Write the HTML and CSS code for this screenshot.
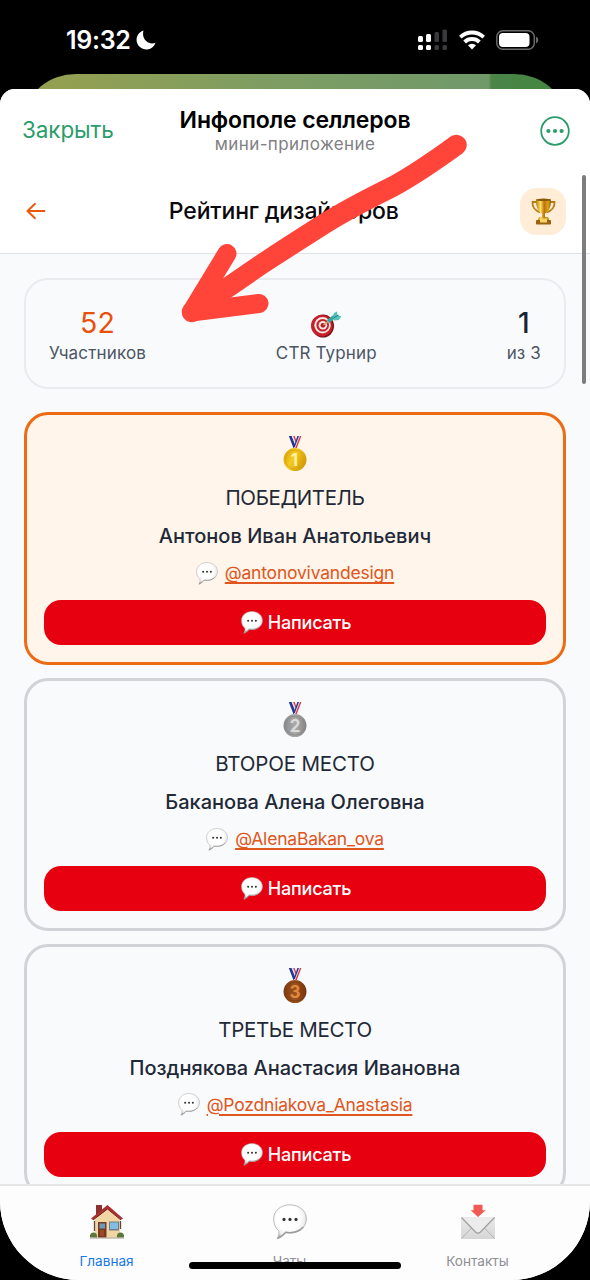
FILE: index.html
```html
<!DOCTYPE html>
<html lang="ru">
<head>
<meta charset="utf-8">
<title>Инфополе селлеров</title>
<link rel="stylesheet" href="styles.css">
</head>
<body>
<svg class="defs" width="0" height="0" aria-hidden="true">
  <defs>
    <radialGradient id="bubbleFill" cx="45%" cy="40%" r="60%"><stop offset="0.6" stop-color="#fff"/><stop offset="0.85" stop-color="#ececec"/><stop offset="1" stop-color="#a8a8a8"/></radialGradient>
    <linearGradient id="goldFill" x1="0" x2="1" y1="0" y2="0.5"><stop offset="0" stop-color="#d89c08"/><stop offset="0.5" stop-color="#f4cc22"/><stop offset="1" stop-color="#d29a08"/></linearGradient>
    <linearGradient id="silverFill" x1="0" x2="1"><stop offset="0" stop-color="#8b8b8b"/><stop offset="0.5" stop-color="#aaa"/><stop offset="1" stop-color="#858585"/></linearGradient>
    <linearGradient id="bronzeFill" x1="0" x2="1"><stop offset="0" stop-color="#7c3b12"/><stop offset="0.5" stop-color="#a0521c"/><stop offset="1" stop-color="#70330e"/></linearGradient>
    <linearGradient id="cupFill" x1="0" x2="1"><stop offset="0" stop-color="#b87808"/><stop offset="0.3" stop-color="#ffe065"/><stop offset="0.55" stop-color="#b97407"/><stop offset="0.8" stop-color="#dda21a"/><stop offset="1" stop-color="#8f5906"/></linearGradient>
    <linearGradient id="mailFill" x1="0" x2="0" y1="0" y2="1"><stop offset="0" stop-color="#e9e9e9"/><stop offset="1" stop-color="#d6d6d6"/></linearGradient>
    <symbol id="bubble" viewBox="0 0 34 36">
      <path d="M17 .8C26.5.8 33.4 7 33.4 14.8S26.5 29 17 29c-1.500 0-3-.1-4.300-.5-2 2.500-5 5.200-8.600 6.200 1.600-2.400 2.200-5 1.800-7.800C2.500 24.300.6 20 .6 14.800.6 7 7.500.8 17 .8z" fill="url(#bubbleFill)" stroke="#b5b5b5" stroke-width=".9"/>
      <path d="M4.500 34.400c3-1 6-3.500 8.300-6.200 7 1.400 14-.8 17.500-5.200" fill="none" stroke="#9c9c9c" stroke-width="1.500"/>
      <circle cx="11" cy="15.400" r="1.600" fill="#333"/><circle cx="17" cy="15.400" r="1.600" fill="#333"/><circle cx="23" cy="15.400" r="1.600" fill="#333"/>
    </symbol>
    <symbol id="ribbon" viewBox="0 0 24 36">
      <path d="M5.800 0h2.900l4.500 10.500-1.500 1.700h-1.200z" fill="#283891"/>
      <path d="M8.700 0h1.700l3.100 8-.8 2.200z" fill="#dbe0f5"/>
      <path d="M10.200 0h1.400l2 5-.7 2z" fill="#df3d4d"/>
      <path d="M16 0h2l-4.700 12h-2.400z" fill="#d9dcee"/>
      <path d="M14.300 0H16l-4.200 11h-1z" fill="#28388f"/>
      <path d="M17 0h1.400l-4.600 12h-1.500z" fill="#e03a43"/>
    </symbol>
  </defs>
</svg>

<div class="phone">
  <header class="status">
    <div class="clock"><span>19:32</span>
      <svg width="20" height="20" viewBox="0 0 20 20"><path d="M7.500.5A9.700 9.700 0 1 0 19.500 12.800C13.500 15.500 5 10 7.500.5z" fill="#fff"/></svg>
    </div>
    <div class="indicators">
      <svg class="signal" width="32" height="22" viewBox="0 0 32 22">
        <g fill="#fff"><rect x="1" y="7" width="5" height="6" rx="1.500"/><rect x="9" y="5" width="5" height="8" rx="1.500"/><rect x="1" y="16" width="5" height="5" rx="1.500"/><rect x="9" y="16" width="5" height="5" rx="1.500"/></g>
        <g fill="#3a3a3c"><rect x="17.500" y="3" width="4.500" height="10" rx="1.500"/><rect x="25.500" y="0.500" width="4.500" height="12.500" rx="1.500"/><rect x="17.500" y="16" width="4.500" height="5" rx="1.500"/><rect x="25.500" y="16" width="4.500" height="5" rx="1.500"/></g>
      </svg>
      <svg class="wifi" width="26" height="20" viewBox="0 0 26 20" fill="none" stroke="#fff" stroke-width="3.900"><path d="M1.300 7.100a17 17 0 0 1 23.400 0"/><path d="M5.600 12a10.800 10.800 0 0 1 14.800 0"/><path d="M13 19.400l-4-4.100a5.800 5.800 0 0 1 8 0z" fill="#fff" stroke="none"/></svg>
      <svg width="43" height="20" viewBox="0 0 43 20"><rect x=".8" y=".8" width="37.500" height="18.400" rx="6" fill="none" stroke="#6a6a6c" stroke-width="1.500"/><rect x="3" y="3" width="30.500" height="14" rx="4" fill="#fff"/><path d="M40 6.800c3 1 3 5.400 0 6.400z" fill="#6a6a6c"/></svg>
    </div>
  </header>
  <div class="backdrop"></div>

  <main class="sheet">
    <div class="sheet-head">
      <span class="close">Закрыть</span>
      <div class="heading"><div class="app-name">Инфополе селлеров</div><div class="app-kind">мини-приложение</div></div>
      <svg class="more" width="30" height="30" viewBox="0 0 30 30"><circle cx="15" cy="15" r="13.800" fill="none" stroke="#2a9d6b" stroke-width="1.800"/><g fill="#2a9d6b"><circle cx="8.400" cy="15" r="2.100"/><circle cx="15" cy="15" r="2.100"/><circle cx="21.600" cy="15" r="2.100"/></g></svg>
    </div>
    <div class="page-head">
      <svg class="back" width="20" height="18" viewBox="0 0 20 18" fill="none" stroke="#ea580c" stroke-width="1.900" stroke-linecap="round" stroke-linejoin="round"><path d="M18.500 9H1.500M9 1.800L1.500 9 9 16.200"/></svg>
      <span class="page-title">Рейтинг дизайнеров</span>
      <span class="trophy">
        <svg width="25" height="27" viewBox="0 0 25 27"><path d="M6 4H1.500C1 9 4.500 13 9.500 14.500M19 4h4.500C24 9 20.500 13 15.500 14.500" fill="none" stroke="#b97b12" stroke-width="1.800"/><path d="M5 1.500h15c.2 7-2 12.500-6 14v4h-3v-4C7 14 4.800 8.500 5 1.500z" fill="url(#cupFill)"/><ellipse cx="12.500" cy="1.800" rx="7.500" ry="1.200" fill="#8b5a09"/><path d="M8 19h9l1.500 4h-12z" fill="url(#cupFill)"/><rect x="5" y="22" width="15" height="4.500" rx=".7" fill="#9b6310"/><rect x="9" y="20.500" width="7" height="4" fill="#f5d568"/></svg>
      </span>
    </div>

    <div class="content">
      <section class="stats">
        <div class="stat"><b class="accent">52</b><span>Участников</span></div>
        <div class="stat"><b>
          <svg class="dart" width="32" height="27" viewBox="0 0 32 27"><ellipse cx="13" cy="15" rx="11" ry="11.500" fill="#7d1119"/><circle cx="11.800" cy="14.700" r="10.800" fill="#c71f2a"/><circle cx="12.500" cy="14.300" r="8.200" fill="#f4e7e5"/><circle cx="12.700" cy="14.300" r="6.300" fill="#c4232c"/><circle cx="12.900" cy="14.300" r="4.300" fill="#f4e7e5"/><circle cx="13" cy="14.300" r="2.400" fill="#b91d26"/><path d="M13.500 14L20 9" stroke="#d1a456" stroke-width="1.500"/><path d="M18 10.500l7-5.500" stroke="#38a69f" stroke-width="3.500"/><path d="M23 6.500L24 2l3-1.500.5 3.500 4 1.500-3 3.500-4.500.5z" fill="#51c3bb"/><path d="M23.500 7l5-3" stroke="#237f7d"/></svg>
        </b><span>CTR Турнир</span></div>
        <div class="stat"><b>1</b><span>из 3</span></div>
      </section>

      <article class="card winner">
        <svg class="medal" width="24" height="36" viewBox="0 0 24 36"><use href="#ribbon" width="24" height="36"/><circle cx="12" cy="23.600" r="11.500" fill="url(#goldFill)"/><circle cx="12" cy="23.600" r="9.500" fill="none" stroke="#dda60c"/><text x="11.500" y="29.800" class="digit" fill="#fff0a5">1</text></svg>
        <h2 class="place-1">ПОБЕДИТЕЛЬ</h2>
        <h3>Антонов Иван Анатольевич</h3>
        <p><svg width="22" height="23"><use href="#bubble"/></svg><a>@antonovivandesign</a></p>
        <button><svg width="22" height="23"><use href="#bubble"/></svg>Написать</button>
      </article>
      <article class="card">
        <svg class="medal" width="24" height="36" viewBox="0 0 24 36"><use href="#ribbon" width="24" height="36"/><circle cx="12" cy="23.600" r="11.500" fill="url(#silverFill)"/><circle cx="12" cy="23.600" r="9.500" fill="none" stroke="#8a8a8a"/><text x="12" y="29.800" class="digit" fill="#dadada">2</text></svg>
        <h2 class="place-2">ВТОРОЕ МЕСТО</h2>
        <h3>Баканова Алена Олеговна</h3>
        <p><svg width="22" height="23"><use href="#bubble"/></svg><a>@AlenaBakan_ova</a></p>
        <button><svg width="22" height="23"><use href="#bubble"/></svg>Написать</button>
      </article>
      <article class="card">
        <svg class="medal" width="24" height="36" viewBox="0 0 24 36"><use href="#ribbon" width="24" height="36"/><circle cx="12" cy="23.600" r="11.500" fill="url(#bronzeFill)"/><circle cx="12" cy="23.600" r="9.500" fill="none" stroke="#7f3d13"/><text x="12" y="29.800" class="digit" fill="#e08a3d">3</text></svg>
        <h2 class="place-3">ТРЕТЬЕ МЕСТО</h2>
        <h3>Позднякова Анастасия Ивановна</h3>
        <p><svg width="22" height="23"><use href="#bubble"/></svg><a>@Pozdniakova_Anastasia</a></p>
        <button><svg width="22" height="23"><use href="#bubble"/></svg>Написать</button>
      </article>
    </div>

    <nav class="tabs">
      <div class="tab active">
        <svg width="34" height="36" viewBox="0 0 34 36"><rect x="6" y="1" width="6" height="12" fill="#8e302f"/><path d="M5 15L17.500 4 30 15v18.500H5z" fill="#f0d6a4"/><path d="M17.500 1L33 14.500l-2 1.300L17.500 5 3 16l-2-1.500z" fill="#aa3030"/><path d="M3 16L17.500 5 31 16" fill="none" stroke="#762321"/><rect x="8" y="18" width="8.500" height="15.500" fill="#773a25"/><rect x="9.500" y="19.500" width="5.500" height="5" fill="#6c99bd"/><rect x="10" y="26" width="4" height="6" fill="#9a4a2a"/><rect x="19" y="17.500" width="10" height="9" fill="#6e7d89"/><rect x="20" y="18.500" width="8" height="6.500" fill="#84bde4"/><path d="M4.500 17v10M30.500 17v8" stroke="#65443b" stroke-width="1.300"/><path d="M0 33.500c-.5-3 1-5 3.500-5s4 2 3.500 5zM27 33.500c-.5-3 1-5 3.500-5s4 2 3.500 5z" fill="#59763b"/><path d="M0 34h34" stroke="#a5978b"/></svg>
        <span>Главная</span>
      </div>
      <div class="tab"><svg width="34" height="36"><use href="#bubble"/></svg><span>Чаты</span></div>
      <div class="tab">
        <svg width="36" height="36" viewBox="0 0 36 36"><rect x="1" y="13" width="34" height="22" rx="1" fill="url(#mailFill)"/><path d="M1.500 34.500l12.500-13M34.500 34.500L22 21.500" stroke="#b3b3b3" fill="none"/><path d="M1.500 13.500L15.500 28c1.500 1.500 3.500 1.500 5 0l14-14.500" fill="#ececec" stroke="#9f9f9f" stroke-width="1.200"/><path d="M13.500.8h9v5.500h3.300L18 13l-7.300-6.700h2.800z" fill="#f05a55"/></svg>
        <span>Контакты</span>
      </div>
    </nav>
    <div class="home-bar"></div>
    <div class="scrollbar"></div>
  </main>
  <svg class="arrow" width="590" height="400" viewBox="0 0 590 400" fill="none" stroke="#ff453a" stroke-linecap="round" stroke-linejoin="round"><path d="M456.500 145C438 158 414 176 387 189.500S343 212 324 224 288 247 268 260 216 296 192 312" stroke-width="20.500"/><path d="M227 253.500L191.500 312l67.500-8.500" stroke-width="19"/></svg>
</div>
</body>
</html>
```
FILE: styles.css
```css
* { box-sizing: border-box; }
body { margin: 0; background: #000; font-family: Inter, "Noto Sans", sans-serif; }
.defs { position: absolute; }
.phone { position: relative; width: 590px; height: 1280px; overflow: hidden; display: flex; flex-direction: column; background: #000; }
svg { display: block; flex: none; }

.status { height: 74px; flex: none; padding: 6px 51px 0 66px; display: flex; justify-content: space-between; align-items: center; color: #fff; }
.clock { display: flex; align-items: center; gap: 5px; font-size: 25px; font-weight: 600; line-height: 30px; letter-spacing: -0.3px; }
.indicators { display: flex; align-items: center; }
.signal { margin-right: 10px; }
.wifi { margin-right: 11px; }

.backdrop { height: 60px; flex: none; margin: 0 26px -45px; border-radius: 50px 50px 0 0 / 43px 43px 0 0; background: linear-gradient(90deg, #96a04e, #7e9d63 45%, #70996a 86%, #4b8548 86.500%, #438640); }

.sheet { position: relative; height: 1191px; flex: none; display: flex; flex-direction: column; overflow: hidden; background: #f9fafc; border-radius: 15px 15px 79px 79px; }
.sheet-head { height: 80px; flex: none; display: grid; grid-template-columns: 120px 1fr 120px; align-items: start; padding: 17px 20px 0; background: #fff; }
.close { margin: 9px 0 0 2px; font-size: 22.500px; line-height: 30px; color: #2a9d6b; letter-spacing: -0.1px; white-space: nowrap; }
.heading { text-align: center; white-space: nowrap; }
.app-name { font-size: 23px; font-weight: 600; line-height: 28px; letter-spacing: -0.15px; color: #000; }
.app-kind { font-size: 17px; line-height: 21px; letter-spacing: 0.4px; color: #7f7f84; }
.more { justify-self: end; margin-top: 10px; }

.page-head { height: 85px; flex: none; display: flex; justify-content: space-between; align-items: center; padding: 0 24px 0 25.500px; background: #fff; border-bottom: 1px solid #dfe1e4; }
.page-title { margin-left: 2px; font-size: 23px; font-weight: 500; line-height: 30px; letter-spacing: -0.17px; color: #09090b; white-space: nowrap; }
.trophy { width: 46px; height: 47px; display: grid; place-items: center; border-radius: 16px; background: #ffedd8; }

.content { flex: 1; min-height: 0; overflow: hidden; padding: 24px 24px 0; }
.stats { height: 111px; margin-bottom: 23.400px; padding: 27px 23px 0; display: flex; justify-content: space-between; border: 2px solid #eaebee; border-radius: 24px; }
.stat { display: flex; flex-direction: column; align-items: center; font-size: 17px; line-height: 26px; letter-spacing: 0.15px; color: #4b5563; white-space: nowrap; }
.stat b { height: 33px; font-size: 28px; font-weight: 500; line-height: 32px; color: #1a2233; }
.stat b.accent { font-weight: 400; font-size: 28.500px; color: #ea500c; }
.dart { margin: 4px 0 0; }

.card { height: 253px; margin-bottom: 12.700px; padding: 21px 17px 17px; display: flex; flex-direction: column; align-items: center; border: 3px solid #d1d3d7; border-radius: 24px; color: #1f2937; }
.card.winner { background: #fff5eb; border-color: #ec6c15; }
.medal { margin-bottom: 11px; }
.digit { font: 700 17px Inter, sans-serif; text-anchor: middle; }
.card h2 { margin: 0 0 8px; font-size: 20.500px; font-weight: 400; line-height: 30px; }
.card h2.place-1 { letter-spacing: -0.4px; }
.card h2.place-2 { letter-spacing: -0.15px; }
.card h2.place-3 { letter-spacing: -0.32px; }
.card h3 { margin: 0 0 7px; font-size: 20px; font-weight: 500; line-height: 30px; white-space: nowrap; }
.card p { margin: 0 0 12px; height: 30px; display: flex; align-items: center; gap: 7px; font-size: 17.500px; letter-spacing: -0.2px; }
.card a { color: #df5620; line-height: 30px; text-decoration: underline; text-decoration-thickness: 1.500px; text-underline-offset: 3px; }
.card button { width: 100%; height: 45px; padding: 0 0 0 2px; display: flex; align-items: center; justify-content: center; gap: 5px; border: 0; border-radius: 17px; background: #e7000f; color: #fff; font: 500 18px Inter, sans-serif; letter-spacing: -0.2px; }

.tabs { height: 96px; flex: none; display: grid; grid-template-columns: 183px 183px 193px; padding: 18px 16px 0 15px; background: #fdfdfe; border-top: 2px solid #e4e5e7; }
.tab { display: flex; flex-direction: column; align-items: center; gap: 11px; font-size: 13.600px; line-height: 20px; color: #8e8e93; }
.tab.active { color: #1877e6; }
.home-bar { position: absolute; left: 189px; bottom: 11px; width: 212px; height: 7px; border-radius: 4px; background: #000; }
.scrollbar { position: absolute; left: 582px; top: 86px; width: 4px; height: 209px; border-radius: 2px; background: #7c7d7e; }
.arrow { position: absolute; left: 0; top: 0; }
```
